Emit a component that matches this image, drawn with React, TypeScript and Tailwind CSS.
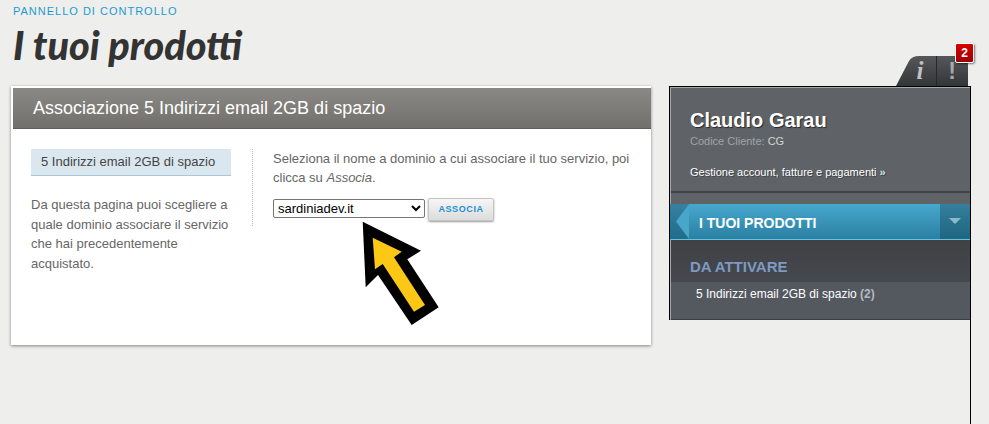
import React from "react";

function Tabs() {
  return (
    <div className="relative mr-[21px] flex h-[30px] w-[72px]">
      <svg className="absolute inset-0" width="72" height="30" viewBox="0 0 72 30">
        <defs>
          <linearGradient id="tab" x1="0" y1="0" x2="0" y2="1">
            <stop offset="0" stopColor="#55575a" />
            <stop offset="1" stopColor="#333538" />
          </linearGradient>
        </defs>
        <path d="M0 30 L13 5 Q16 0 23 0 L72 0 L72 30 Z" fill="url(#tab)" />
        <path d="M40.5 0 V30" stroke="#25272a" strokeWidth="1" />
      </svg>
      <span className="relative ml-[14px] w-[20px] text-center [font-family:'Liberation_Serif',serif] text-[25px] leading-[30px] font-bold italic text-[#c0c0c0]">
        i
      </span>
      <span className="relative ml-[7px] w-[30px] text-center [font-family:'Liberation_Sans',sans-serif] text-[23px] leading-[30px] font-bold text-[#a8a8a8]">
        !
      </span>
      <span className="absolute -top-[13px] -right-[6px] flex h-[20px] w-[19px] items-center justify-center rounded-[2px] border border-white bg-gradient-to-b from-[#d80000] to-[#a00000] [font-family:'Liberation_Sans',sans-serif] text-[12px] font-bold text-white shadow-[1px_1px_2px_rgba(0,0,0,0.5)]">
        2
      </span>
    </div>
  );
}

function Sidebar() {
  return (
    <aside className="flex h-[338px] w-[302px] flex-col border-r border-black">
      <div className="h-[234px] border-t border-l border-t-black border-l-black">
        <div className="flex h-full flex-col border-t border-l border-[#a5a7a8] bg-[#5f6367]">
          <div className="h-[105px] border-b-2 border-[#404347] pl-[19px]">
            <h2 className="mt-[20px] text-[20px] leading-[24px] font-bold text-white [text-shadow:1px_1px_1px_rgba(0,0,0,0.6)]">
              Claudio Garau
            </h2>
            <p className="mt-[2px] text-[11px] leading-[14px] text-[#a2a4a6]">
              Codice Cliente: <span className="text-[#d5d5d5]">CG</span>
            </p>
            <p className="mt-[17px] text-[11px] leading-[14px] text-white [text-shadow:1px_1px_0_rgba(0,0,0,0.35)]">
              Gestione account, fatture e pagamenti <b className="text-[#cfe2ee]">»</b>
            </p>
          </div>

          <div className="mt-[11px] -ml-px flex h-[36px] border-b border-[#62c3e2] bg-gradient-to-b from-[#47a8cd] to-[#2a80a3]">
            <div className="flex w-[19px] items-center justify-end bg-gradient-to-b from-[#35819f] to-[#206c8b]">
              <svg width="13" height="35" viewBox="0 0 13 35">
                <path d="M13 0 L0 17.5 L13 35 Z" fill="#47a6ca" />
              </svg>
            </div>
            <span className="ml-[10px] flex-1 text-[14px] leading-[39px] font-bold text-white">I TUOI PRODOTTI</span>
            <div className="flex w-[30px] justify-center bg-gradient-to-b from-[#347f9c] to-[#1e6681] pt-[14px]">
              <svg width="12" height="6" viewBox="0 0 12 6">
                <path d="M0 0 H12 L6 6 Z" fill="#8fb8c9" />
              </svg>
            </div>
          </div>

          <div className="h-[42px] bg-gradient-to-b from-[#3f4145] to-[#45484d] pl-[19px]">
            <h3 className="pt-[18px] text-[15px] leading-[18px] font-bold text-[#7e9ac2]">DA ATTIVARE</h3>
          </div>
          <div className="flex-1 border-b border-[#3c3f44] bg-[#54585f] pl-[25px]">
            <p className="pt-[4px] text-[12px] leading-[16px] text-white">
              5 Indirizzi email 2GB di spazio <span className="font-bold text-[#b4b8c0]">(2)</span>
            </p>
          </div>
        </div>
      </div>
    </aside>
  );
}

function Card() {
  return (
    <section className="h-[259px] w-[640px] border-2 border-r-0 border-white bg-white shadow-[0_1px_3px_rgba(0,0,0,0.45)]">
      <div className="h-[41px] border-b border-[#5f5e5b] bg-gradient-to-b from-[#8b8986] to-[#72706c] pl-[20px] text-[18px] leading-[41px] text-white">
        Associazione 5 Indirizzi email 2GB di spazio
      </div>
      <div className="flex pt-[20px] pl-[18px]">
        <div className="w-[200px]">
          <div className="h-[27px] border-b border-[#a9c6da] bg-[#dbe7ee] pl-[10px] text-[13px] leading-[25px] text-[#444]">
            5 Indirizzi email 2GB di spazio
          </div>
          <p className="mt-[19px] text-[13px] leading-[19.5px] text-[#666]">
            Da questa pagina puoi scegliere a quale dominio associare il servizio che hai precedentemente acquistato.
          </p>
        </div>
        <div className="ml-[21px] h-[77px] border-l border-dotted border-[#bbb]" />
        <div className="ml-[20px] w-[360px]">
          <p className="text-[13px] leading-[19px] text-[#666]">
            Seleziona il nome a dominio a cui associare il tuo servizio, poi clicca su <i>Associa</i>.
          </p>
          <div className="mt-[11px] flex items-start">
            <select className="mt-[1px] h-[19px] w-[152px] appearance-auto rounded-[2px] border border-[#767676] bg-white [font-family:'Liberation_Sans',sans-serif] text-[13px] text-black">
              <option>sardiniadev.it</option>
            </select>
            <button className="ml-[3px] h-[23px] w-[66px] rounded-[2px] border border-[#c4c4c4] bg-gradient-to-b from-[#f6f6f6] to-[#dcdcdc] text-[9px] font-bold tracking-[0.6px] text-[#1e8fd5] shadow-[0_1px_2px_rgba(0,0,0,0.4)]">
              ASSOCIA
            </button>
          </div>
        </div>
      </div>
    </section>
  );
}

export default function App() {
  return (
    <div className="relative h-[424px] w-[989px] overflow-hidden bg-[#eeeeec] [font-family:'Liberation_Sans',Arial,sans-serif]">
      <header className="flex h-[86px] items-end justify-between pl-[13px]">
        <div className="h-full">
          <p className="pt-[5px] text-[11px] leading-[13px] tracking-[1px] text-[#1d9bd0]">PANNELLO DI CONTROLLO</p>
          <h1 className="mt-[2px] [font-family:Lato,sans-serif] text-[39.6px] leading-[50px] font-black text-[#333] italic">
            I tuoi prodotti
          </h1>
        </div>
        <Tabs />
      </header>
      <div className="flex items-start pl-[11px]">
        <Card />
        <div className="ml-[18px]">
          <Sidebar />
        </div>
      </div>
      {/* freccia sopra il contenuto */}
      <svg className="absolute top-[215px] left-[355px]" width="95" height="115" viewBox="355 215 95 115">
        <polygon points="362.7,221.7 421,250.7 407.3,259.3 438.7,307.3 411.7,325 378,275 365.7,287.3" fill="#000" />
        <polygon points="372.7,237.7 401.7,251.7 394,257.3 425,305 414,311.7 382.7,264 375,269.3" fill="#fdc716" />
      </svg>
    </div>
  );
}
